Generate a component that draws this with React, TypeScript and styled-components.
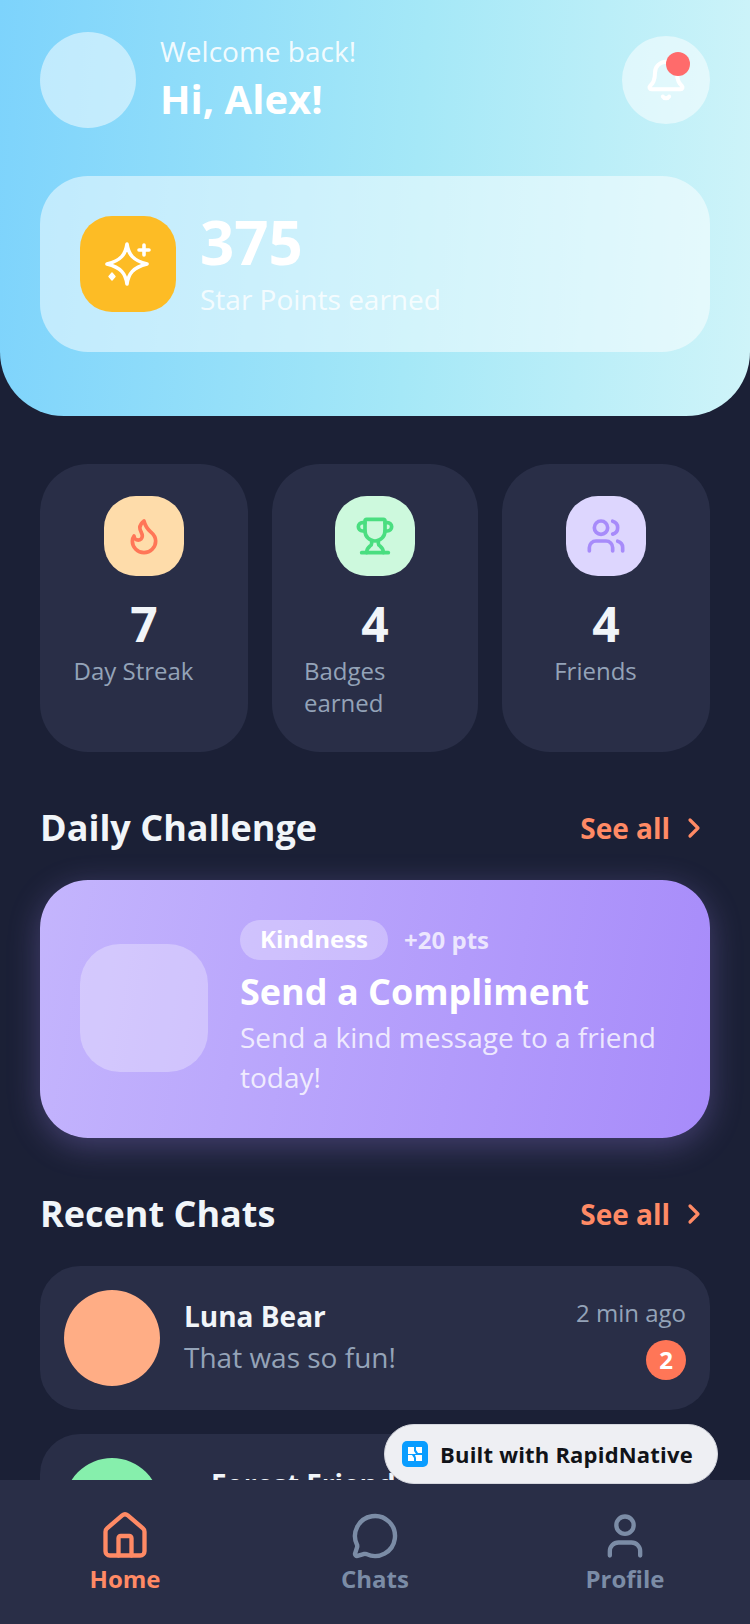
import React from 'react'
import styled, { createGlobalStyle } from 'styled-components'
import { Bell, ChevronRight, Flame, House, MessageCircle, Trophy, User, Users } from 'lucide-react'

const GlobalStyle = createGlobalStyle`
  html, body, #root {
    margin: 0;
    padding: 0;
    height: 100%;
  }
  body {
    font-family: 'Open Sans', 'Noto Sans', sans-serif;
    background: #1b2036;
  }
  * {
    box-sizing: border-box;
  }
`

const stats = [
  { value: '7', label: 'Day Streak', tint: '#fedcaa', color: '#ff7657', Icon: Flame },
  { value: '4', label: 'Badges earned', tint: '#cdf9dd', color: '#4ade80', Icon: Trophy },
  { value: '4', label: 'Friends', tint: '#ddd6fe', color: '#a78bfa', Icon: Users },
]

const tabs = [
  { label: 'Home', Icon: House, size: 52, active: true },
  { label: 'Chats', Icon: MessageCircle, size: 48, active: false },
  { label: 'Profile', Icon: User, size: 52, active: false },
]

function SectionTitle({ title }: { title: string }) {
  return (
    <SectionHeader>
      <SectionName>{title}</SectionName>
      <SeeAll>
        See all
        <ChevronRight size={32} strokeWidth={2.4} />
      </SeeAll>
    </SectionHeader>
  )
}

function SparkleIcon() {
  return (
    <svg width="48" height="48" viewBox="0 0 48 48" fill="none" stroke="#ffffff" strokeWidth="3.6" strokeLinecap="round" strokeLinejoin="round">
      <path d="M23 4c1.500 10.500 6 16.500 20 20-14 3.500-18.500 9.500-20 20-1.500-10.500-6-16.500-20-20 14-3.500 18.500-9.500 20-20z" />
      <path d="M40 5v10M35 10h10" />
      <path d="M8 33l3 3.500-3 3.500-3-3.500z" fill="#ffffff" strokeWidth="1.400" />
    </svg>
  )
}

export default function App() {
  return (
    <Screen>
      <GlobalStyle />
      <Scroll>
        <Hero>
          <HeroTop>
            <Avatar />
            <Greeting>
              <Welcome>Welcome back!</Welcome>
              <HiName>Hi, Alex!</HiName>
            </Greeting>
            <BellButton>
              <Bell size={44} color="#ffffff" strokeWidth={2.2} />
              <BellDot />
            </BellButton>
          </HeroTop>
          <PointsCard>
            <PointsIcon>
              <SparkleIcon />
            </PointsIcon>
            <div>
              <PointsValue>375</PointsValue>
              <PointsLabel>Star Points earned</PointsLabel>
            </div>
          </PointsCard>
        </Hero>

        <StatsRow>
          {stats.map(({ value, label, tint, color, Icon }) => (
            <StatCard key={label}>
              <StatIcon $tint={tint}>
                <Icon size={40} color={color} strokeWidth={2.2} />
              </StatIcon>
              <StatValue>{value}</StatValue>
              <StatLabel>{label}</StatLabel>
            </StatCard>
          ))}
        </StatsRow>

        <SectionTitle title="Daily Challenge" />
        <ChallengeCard>
          <ChallengeIcon />
          <ChallengeBody>
            <TagRow>
              <Tag>Kindness</Tag>
              <Points>+20 pts</Points>
            </TagRow>
            <ChallengeTitle>Send a Compliment</ChallengeTitle>
            <ChallengeText>Send a kind message to a friend today!</ChallengeText>
          </ChallengeBody>
        </ChallengeCard>

        <SectionTitle title="Recent Chats" />
        <ChatList>
          <ChatCard>
            <ChatAvatar $color="#ffad85" />
            <ChatBody>
              <ChatName>Luna Bear</ChatName>
              <ChatMessage>That was so fun!</ChatMessage>
            </ChatBody>
            <ChatMeta>
              <ChatTime>2 min ago</ChatTime>
              <Unread>2</Unread>
            </ChatMeta>
          </ChatCard>
          <ChatCard>
            <ChatAvatar $color="#86efac" />
            <ChatBody $indent>
              <ChatName>Forest Friends</ChatName>
            </ChatBody>
          </ChatCard>
        </ChatList>
      </Scroll>

      <TabBar>
        {tabs.map(({ label, Icon, size, active }) => (
          <Tab key={label} $active={active}>
            <TabIcon>
              <Icon size={size} strokeWidth={size === 48 ? 2.2 : 2} />
            </TabIcon>
            <span>{label}</span>
          </Tab>
        ))}
      </TabBar>

      <BuiltBadge>
        <svg width="26" height="26" viewBox="0 0 26 26">
          <rect width="26" height="26" rx="5" fill="#0a9dff" />
          <path d="M6 6h6v4l2 3h-8zM14 6h6v6h-4l-2-3zM6 14h4l2 3v3H6zM14 20v-3l-1-3h7v6z" fill="#ffffff" />
        </svg>
        Built with RapidNative
      </BuiltBadge>
    </Screen>
  )
}

const Screen = styled.div`
  position: relative;
  width: 750px;
  height: 1624px;
  display: flex;
  flex-direction: column;
  overflow: hidden;
  background: #1b2036;
`

const Scroll = styled.div`
  flex: 1;
  min-height: 0;
  overflow: hidden;
`

const Hero = styled.div`
  height: 416px;
  padding: 32px 40px 0;
  border-radius: 0 0 64px 64px;
  background: linear-gradient(94deg, #7dd3fc 0%, #a5e8f7 55%, #cff4f9 100%);
`

const HeroTop = styled.div`
  display: flex;
  align-items: center;
`

const Avatar = styled.div`
  width: 96px;
  height: 96px;
  border-radius: 50%;
  background: rgba(255, 255, 255, 0.5);
`

const Greeting = styled.div`
  flex: 1;
  margin-left: 24px;
`

const Welcome = styled.div`
  font-size: 28px;
  line-height: 38px;
  color: rgba(255, 255, 255, 0.9);
`

const HiName = styled.div`
  font-size: 40px;
  line-height: 58px;
  font-weight: 700;
  color: #ffffff;
`

const BellButton = styled.div`
  position: relative;
  width: 88px;
  height: 88px;
  display: flex;
  align-items: center;
  justify-content: center;
  border-radius: 50%;
  background: rgba(255, 255, 255, 0.5);
`

const BellDot = styled.div`
  position: absolute;
  top: 16px;
  right: 20px;
  width: 24px;
  height: 24px;
  border-radius: 50%;
  background: #ff6b6b;
`

const PointsCard = styled.div`
  display: flex;
  align-items: center;
  gap: 24px;
  height: 176px;
  margin-top: 48px;
  padding: 0 40px;
  border-radius: 48px;
  background: rgba(255, 255, 255, 0.5);
`

const PointsIcon = styled.div`
  width: 96px;
  height: 96px;
  display: flex;
  align-items: center;
  justify-content: center;
  border-radius: 32px;
  background: #fdbc25;
`

const PointsValue = styled.div`
  margin-top: -2px;
  font-size: 60px;
  line-height: 70px;
  font-weight: 700;
  color: #ffffff;
`

const PointsLabel = styled.div`
  margin-top: 2px;
  font-size: 28px;
  line-height: 40px;
  color: rgba(255, 255, 255, 0.8);
`

const StatsRow = styled.div`
  display: grid;
  grid-template-columns: 208px 206px 208px;
  gap: 24px;
  margin-top: 48px;
  padding: 0 40px;
`

const StatCard = styled.div`
  height: 288px;
  display: flex;
  flex-direction: column;
  align-items: center;
  padding: 32px;
  border-radius: 48px;
  background: #292e47;
`

const StatIcon = styled.div<{ $tint: string }>`
  width: 80px;
  height: 80px;
  display: flex;
  align-items: center;
  justify-content: center;
  border-radius: 32px;
  background: ${(props) => props.$tint};
`

const StatValue = styled.div`
  margin-top: 18px;
  font-size: 48px;
  line-height: 60px;
  font-weight: 700;
  color: #f1f5f9;
`

const StatLabel = styled.div`
  margin-top: 1px;
  margin-right: 21px;
  font-size: 24px;
  line-height: 32px;
  color: #94a3b8;
`

const SectionHeader = styled.div`
  display: flex;
  align-items: center;
  justify-content: space-between;
  margin-top: 52px;
  padding: 0 40px;
`

const SectionName = styled.div`
  font-size: 36px;
  line-height: 48px;
  font-weight: 700;
  color: #f1f5f9;
`

const SeeAll = styled.div`
  display: flex;
  align-items: center;
  gap: 8px;
  font-size: 28px;
  font-weight: 700;
  color: #ff8a65;
`

const ChallengeCard = styled.div`
  display: flex;
  align-items: center;
  gap: 32px;
  height: 258px;
  margin: 28px 40px 0;
  padding: 0 40px 2px;
  border-radius: 48px;
  background: linear-gradient(100deg, #c4b5fd 0%, #a78bfa 100%);
  box-shadow: 0 8px 32px rgba(167, 139, 250, 0.3);
`

const ChallengeIcon = styled.div`
  flex: 0 0 128px;
  height: 128px;
  border-radius: 40px;
  background: rgba(255, 255, 255, 0.3);
`

const ChallengeBody = styled.div`
  flex: 1;
  min-width: 0;
`

const TagRow = styled.div`
  display: flex;
  align-items: center;
  gap: 16px;
`

const Tag = styled.div`
  height: 40px;
  padding: 0 20px;
  border-radius: 20px;
  font-size: 24px;
  line-height: 38px;
  font-weight: 700;
  color: #ffffff;
  background: rgba(255, 255, 255, 0.3);
`

const Points = styled.div`
  font-size: 24px;
  font-weight: 700;
  color: rgba(255, 255, 255, 0.75);
`

const ChallengeTitle = styled.div`
  margin-top: 8px;
  font-size: 36px;
  line-height: 47px;
  font-weight: 700;
  color: #ffffff;
`

const ChallengeText = styled.div`
  margin-top: 2px;
  font-size: 28px;
  line-height: 40px;
  color: rgba(255, 255, 255, 0.8);
`

const ChatList = styled.div`
  display: flex;
  flex-direction: column;
  gap: 24px;
  margin-top: 28px;
  padding: 0 40px;
`

const ChatCard = styled.div`
  display: flex;
  align-items: center;
  gap: 24px;
  height: 144px;
  padding: 0 24px;
  border-radius: 40px;
  background: #292e47;
`

const ChatAvatar = styled.div<{ $color: string }>`
  flex: 0 0 96px;
  height: 96px;
  border-radius: 50%;
  background: ${(props) => props.$color};
`

const ChatBody = styled.div<{ $indent?: boolean }>`
  flex: 1;
  min-width: 0;
  padding-bottom: 3px;
  ${(props) => (props.$indent ? 'margin-left: 27px; align-self: flex-start; padding-top: 30px;' : '')}
`

const ChatName = styled.div`
  font-size: 28px;
  line-height: 40px;
  font-weight: 700;
  color: #f1f5f9;
`

const ChatMessage = styled.div`
  margin-top: 1px;
  font-size: 28px;
  line-height: 40px;
  color: #94a3b8;
`

const ChatMeta = styled.div`
  display: flex;
  flex-direction: column;
  align-items: flex-end;
  gap: 11px;
`

const ChatTime = styled.div`
  font-size: 24px;
  line-height: 32px;
  color: #94a3b8;
`

const Unread = styled.div`
  width: 40px;
  height: 40px;
  display: flex;
  align-items: center;
  justify-content: center;
  border-radius: 50%;
  font-size: 24px;
  font-weight: 700;
  color: #ffffff;
  background: #ff7657;
`

const TabBar = styled.div`
  flex: 0 0 144px;
  display: grid;
  grid-template-columns: repeat(3, 1fr);
  background: #292e47;
`

const Tab = styled.div<{ $active: boolean }>`
  display: flex;
  flex-direction: column;
  align-items: center;
  padding-top: 29px;
  font-size: 24px;
  line-height: 32px;
  font-weight: 700;
  color: ${(props) => (props.$active ? '#ff8a65' : '#7b8ca6')};
`

const TabIcon = styled.div`
  height: 54px;
  display: flex;
  align-items: center;
  justify-content: center;
`

const BuiltBadge = styled.div`
  position: absolute;
  top: 1424px;
  left: 384px;
  width: 334px;
  height: 60px;
  display: flex;
  align-items: center;
  gap: 12px;
  padding-left: 17px;
  border: 1px solid #d5d7de;
  border-radius: 30px;
  font-size: 22px;
  font-weight: 700;
  letter-spacing: 0.2px;
  color: #111318;
  background: #eeeff3;
`
